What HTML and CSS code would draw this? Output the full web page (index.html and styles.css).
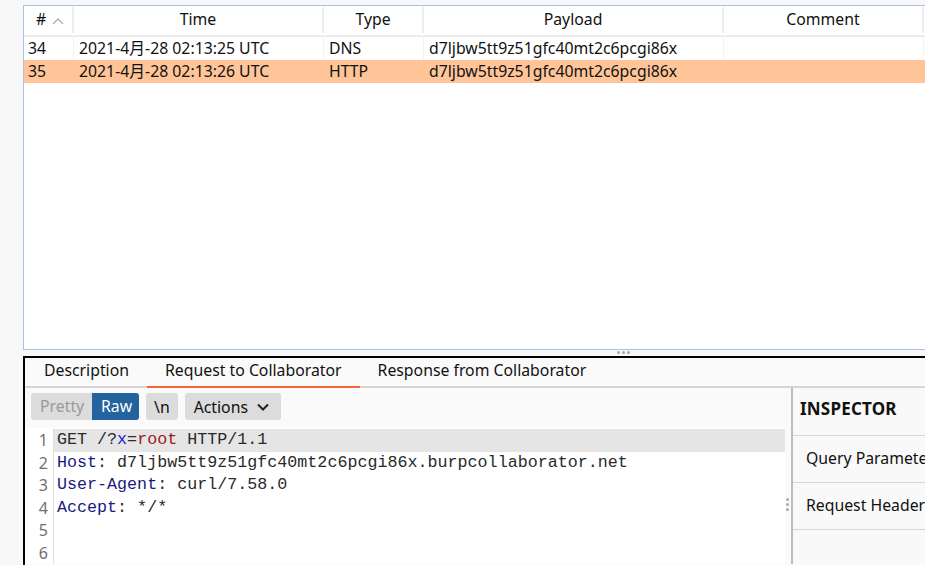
FILE: index.html
```html
<!DOCTYPE html>
<html>
<head>
<meta charset="utf-8">
<link rel="stylesheet" href="styles.css">
</head>
<body>
<div class="page">
  <div class="table">
    <div class="thead">
      <div class="th c-num"><span>#</span><svg class="sort" width="12" height="8" viewBox="0 0 12 8"><path d="M1 7 L6 2 L11 7" fill="none" stroke="#b0b0b0" stroke-width="1.3"/></svg></div>
      <div class="th c-time">Time</div>
      <div class="th c-type">Type</div>
      <div class="th c-payload">Payload</div>
      <div class="th c-comment">Comment</div>
    </div>
    <div class="tr">
      <div class="td c-num">34</div>
      <div class="td c-time">2021-4月-28 02:13:25 UTC</div>
      <div class="td c-type">DNS</div>
      <div class="td c-payload">d7ljbw5tt9z51gfc40mt2c6pcgi86x</div>
      <div class="td c-comment"></div>
    </div>
    <div class="tr sel">
      <div class="td c-num">35</div>
      <div class="td c-time">2021-4月-28 02:13:26 UTC</div>
      <div class="td c-type">HTTP</div>
      <div class="td c-payload">d7ljbw5tt9z51gfc40mt2c6pcgi86x</div>
      <div class="td c-comment"></div>
    </div>
  </div>
  <div class="hsplit"><span class="dots"><i></i><i></i><i></i></span></div>
  <div class="bottom">
    <div class="tabs">
      <div class="tab">Description</div>
      <div class="tab active">Request to Collaborator</div>
      <div class="tab">Response from Collaborator</div>
    </div>
    <div class="body">
      <div class="editor-pane">
        <div class="toolbar">
          <div class="seg"><span class="seg-btn off">Pretty</span><span class="seg-btn on">Raw</span></div>
          <span class="btn">\n</span>
          <span class="btn actions">Actions<svg width="14" height="10" viewBox="0 0 14 10"><path d="M2 2.5 L7 7.5 L12 2.5" fill="none" stroke="#222" stroke-width="2"/></svg></span>
        </div>
        <div class="editor">
          <div class="line hl"><span class="ln">1</span><span class="code">GET /?<span class="pk">x</span>=<span class="pv">root</span> HTTP/1.1</span></div>
          <div class="line"><span class="ln">2</span><span class="code"><span class="hk">Host</span>: d7ljbw5tt9z51gfc40mt2c6pcgi86x.burpcollaborator.net</span></div>
          <div class="line"><span class="ln">3</span><span class="code"><span class="hk">User-Agent</span>: curl/7.58.0</span></div>
          <div class="line"><span class="ln">4</span><span class="code"><span class="hk">Accept</span>: */*</span></div>
          <div class="line"><span class="ln">5</span><span class="code"></span></div>
          <div class="line"><span class="ln">6</span><span class="code"></span></div>
        </div>
      </div>
      <div class="vsplit"><span class="vdots"><i></i><i></i><i></i></span></div>
      <div class="inspector">
        <div class="insp-title">INSPECTOR</div>
        <div class="insp-item">Query Parameters</div>
        <div class="insp-item">Request Headers</div>
      </div>
    </div>
  </div>
</div>
</body>
</html>
```

FILE: styles.css
```css
* { box-sizing: border-box; }
html, body { margin: 0; padding: 0; }
body {
  background: #f8f8f8;
  font-family: "Noto Sans", "Noto Sans CJK SC", sans-serif;
  font-size: 15.8px;
  color: #111;
  width: 925px;
  height: 565px;
  overflow: hidden;
}
.page {
  padding: 5px 0 0 23px;
  width: 960px;
}
.table {
  height: 345px;
  background: #fff;
  border: 1px solid #a9c1e2;
  border-right: none;
}
.thead {
  display: flex;
  height: 31px;
  border-bottom: 2px solid #ececec;
}
.th {
  display: flex;
  align-items: center;
  justify-content: center;
  border-right: 2px solid #ececec;
  margin: 1px 0 2px;
  line-height: 1;
}
.c-num { width: 50px; }
.c-time { width: 250px; }
.c-type { width: 100px; }
.c-payload { width: 300px; }
.c-comment { width: 200px; }
.th.c-num { gap: 6px; padding-left: 4px; }
.sort { margin-top: 1px; }
.tr {
  display: flex;
  height: 23px;
}
.td {
  padding-left: 5px;
  line-height: 23px;
  white-space: nowrap;
  border-right: 1px solid #f3f3f3;
}
.td.c-num { padding-left: 4px; }
.tr.sel { background: #ffc599; }
.tr.sel .td { border-right-color: transparent; }

.hsplit {
  height: 6px;
  position: relative;
}
.dots {
  position: absolute;
  left: 594px;
  top: 1px;
  display: flex;
  gap: 2px;
}
.dots i, .vdots i {
  display: block;
  width: 3px;
  height: 3px;
  border-radius: 50%;
  background: #a8a8a8;
}
.bottom {
  border-left: 2px solid #000;
  border-top: 2px solid #000;
  background: #fafafa;
  height: 210px;
}
.tabs {
  display: flex;
  height: 30px;
  border-bottom: 2px solid #d6d6d6;
  padding-left: 1px;
}
.tab {
  padding: 0 18px;
  line-height: 24px;
  height: 30px;
  margin-bottom: -2px;
  border-bottom: 2px solid transparent;
}
.tab.active { border-bottom-color: #f2643a; }
.body {
  display: flex;
  height: 176px;
}
.editor-pane {
  width: 760px;
  display: flex;
  flex-direction: column;
}
.toolbar {
  height: 41px;
  display: flex;
  align-items: center;
  gap: 7px;
  padding-left: 6px;
  padding-bottom: 3px;
}
.seg {
  display: flex;
  height: 27px;
  border-radius: 3px;
  overflow: hidden;
}
.seg-btn {
  padding: 0 9px;
  line-height: 26px;
}
.seg-btn.off { background: #dcdcdc; color: #9a9a9a; width: 61px; }
.seg-btn.on { background: #23639e; color: #fff; width: 47px; }
.btn {
  background: #dcdcdc;
  height: 27px;
  line-height: 26px;
  border-radius: 3px;
  padding: 0 8px;
  display: flex;
  align-items: center;
}
.btn.actions { gap: 8px; padding: 0 11px 0 9px; }
.editor {
  flex: 1;
  background: #fff;
  font-family: "Liberation Mono", "DejaVu Sans Mono", monospace;
  font-size: 16.7px;
  padding-top: 1px;
}
.line {
  display: flex;
  height: 22.5px;
  line-height: 22.5px;
}
.ln {
  width: 29px;
  flex: none;
  text-align: right;
  padding-right: 5px;
  color: #707070;
  font-family: "Noto Sans", sans-serif;
  font-size: 16px;
  border-right: 1px solid #e0e0e0;
}
.code {
  flex: 1;
  padding-left: 3px;
  white-space: pre;
  color: #2a2a2a;
}
.line.hl .code { background: #e5e5e5; }
.pk { color: #1c1ccf; }
.pv { color: #9c1b1b; }
.hk { color: #1a1a80; }
.vsplit {
  width: 6px;
  position: relative;
  background: #fafafa;
}
.vdots {
  position: absolute;
  left: 1px;
  top: 110px;
  display: flex;
  flex-direction: column;
  gap: 2px;
}
.inspector {
  flex: 1;
  border-left: 2px solid #bdbdbd;
  background: #f9f9f9;
}
.insp-title {
  height: 48px;
  line-height: 42px;
  padding-left: 7px;
  font-weight: 700;
  font-size: 17px;
  border-bottom: 1px solid #d6d6d6;
  letter-spacing: 0.2px;
}
.insp-item {
  height: 47px;
  line-height: 45px;
  padding-left: 13px;
  border-bottom: 1px solid #d6d6d6;
  white-space: nowrap;
}
```
